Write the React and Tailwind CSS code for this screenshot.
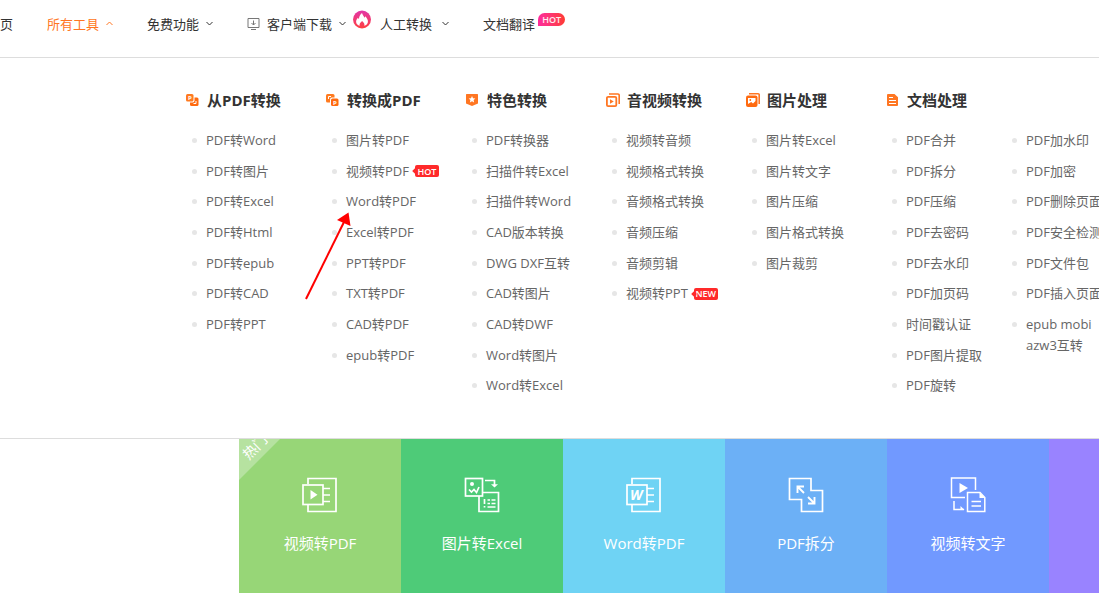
const toolGroups = [
  {
    title: "从PDF转换",
    icon: <FromPdfIcon />,
    lists: [["PDF转Word", "PDF转图片", "PDF转Excel", "PDF转Html", "PDF转epub", "PDF转CAD", "PDF转PPT"]],
  },
  {
    title: "转换成PDF",
    icon: <ToPdfIcon />,
    lists: [["图片转PDF", "视频转PDF", "Word转PDF", "Excel转PDF", "PPT转PDF", "TXT转PDF", "CAD转PDF", "epub转PDF"]],
  },
  {
    title: "特色转换",
    icon: <StarIcon />,
    lists: [
      [
        "PDF转换器",
        "扫描件转Excel",
        "扫描件转Word",
        "CAD版本转换",
        "DWG DXF互转",
        "CAD转图片",
        "CAD转DWF",
        "Word转图片",
        "Word转Excel",
      ],
    ],
  },
  {
    title: "音视频转换",
    icon: <MediaIcon />,
    lists: [["视频转音频", "视频格式转换", "音频格式转换", "音频压缩", "音频剪辑", "视频转PPT"]],
  },
  {
    title: "图片处理",
    icon: <ImageIcon />,
    lists: [["图片转Excel", "图片转文字", "图片压缩", "图片格式转换", "图片裁剪"]],
  },
  {
    title: "文档处理",
    icon: <DocIcon />,
    lists: [
      ["PDF合并", "PDF拆分", "PDF压缩", "PDF去密码", "PDF去水印", "PDF加页码", "时间戳认证", "PDF图片提取", "PDF旋转"],
      ["PDF加水印", "PDF加密", "PDF删除页面", "PDF安全检测", "PDF文件包", "PDF插入页面", "epub mobi azw3互转"],
    ],
  },
];

const badges = { 视频转PDF: "HOT", 视频转PPT: "NEW" };

const tiles = [
  { label: "视频转PDF", color: "bg-[#97d677]", icon: <VideoPdfIcon />, hot: true },
  { label: "图片转Excel", color: "bg-[#4ecb78]", icon: <ImageExcelIcon /> },
  { label: "Word转PDF", color: "bg-[#6fd3f4]", icon: <WordPdfIcon /> },
  { label: "PDF拆分", color: "bg-[#6cb0f6]", icon: <SplitIcon /> },
  { label: "视频转文字", color: "bg-[#7199ff]", icon: <VideoTextIcon /> },
];

function FromPdfIcon() {
  return (
    <svg width="14" height="14" viewBox="0 0 14 14">
      <rect x="4" y="4.500" width="8.500" height="8.500" rx="1.500" fill="#ff6a0f" />
      <rect x="-1" y="0" width="9.500" height="9.500" rx="2" fill="#fff" />
      <rect x="0" y="1" width="7.500" height="7.500" rx="1.500" fill="#ff7a1f" />
      <path d="M7.500 10.500h2.500V8" stroke="#fff" fill="none" />
      <text x="2" y="7" fontSize="6" fontWeight="700" fill="#fff">P</text>
    </svg>
  );
}

function ToPdfIcon() {
  return (
    <svg width="14" height="14" viewBox="0 0 14 14">
      <rect x="0" y="1" width="8.500" height="8.500" rx="1.500" fill="#ff7a1f" />
      <path d="M2.500 6V3.500H5" stroke="#fff" fill="none" />
      <rect x="4" y="4.500" width="10" height="10" rx="2" fill="#fff" />
      <rect x="5" y="5.500" width="7.500" height="7.500" rx="1.500" fill="#ff6a0f" />
      <text x="7" y="11.500" fontSize="6" fontWeight="700" fill="#fff">P</text>
    </svg>
  );
}

function StarIcon() {
  return (
    <svg width="14" height="14" viewBox="0 0 14 14">
      <path d="M.5 1h11q.5 0 .5.500V10.500l-6 2.500-6-2.500V1.500Q0 1 .5 1z" fill="#ff7622" />
      <path d="M6 3l1 2.200 2.400.2-1.800 1.600.5 2.400L6 8.200 3.900 9.400l.5-2.400-1.800-1.600 2.400-.2z" fill="#fff" />
    </svg>
  );
}

function MediaIcon() {
  return (
    <svg width="14" height="14" viewBox="0 0 14 14" fill="none" stroke="#ff7622">
      <path d="M3 1h9a1.200 1.200 0 0 1 1.200 1.200V11" strokeWidth="1.600" />
      <rect x=".9" y="3.900" width="9.400" height="9.200" rx="1.200" strokeWidth="1.800" />
      <path d="M4 6.300l3.800 2.200L4 10.700z" fill="#ff7622" stroke="none" />
    </svg>
  );
}

function ImageIcon() {
  return (
    <svg width="14" height="14" viewBox="0 0 14 14">
      <path d="M3 .8h9.200a1 1 0 0 1 1 1V11" fill="none" stroke="#ff7622" strokeWidth="1.600" />
      <rect x="0" y="2.500" width="11.500" height="11.500" rx="2" fill="#ff6a0f" />
      <path d="M2 5h7.500v3L7 10.500 5.200 9 2 11z" fill="#fff" />
      <circle cx="4.300" cy="7" r=".9" fill="#ff6a0f" />
    </svg>
  );
}

function DocIcon() {
  return (
    <svg width="14" height="14" viewBox="0 0 14 14">
      <path d="M2 1h6.500L12 4.200V12a1 1 0 0 1-1 1H2a1 1 0 0 1-1-1V2a1 1 0 0 1 1-1z" fill="#ff7622" />
      <path d="M3 4.500h4M3 7.500h7M3 10.500h7" stroke="#fff" />
    </svg>
  );
}

function VideoPdfIcon() {
  return (
    <svg width="36" height="36" viewBox="0 0 36 36" fill="none" stroke="#fff" strokeWidth="1.700">
      <path d="M6 7V1.500h28v33H6V28" />
      <rect x="1" y="8" width="20" height="19.500" />
      <path d="M21 11.500h7M21 18h7M21 24.500h7" />
      <path d="M8.500 13l7 4.700-7 4.700z" fill="#fff" stroke="none" />
    </svg>
  );
}

function ImageExcelIcon() {
  return (
    <svg width="36" height="36" viewBox="0 0 36 36" fill="none" stroke="#fff" strokeWidth="1.700">
      <rect x="1.500" y="1.500" width="17" height="17.500" />
      <circle cx="8" cy="7" r="2" fill="#fff" stroke="none" />
      <path d="M5 12.500l2.500 2.500 2.500-2.500 2.500 3 2.500-5.500" />
      <path d="M21 3.500h9.500V8" />
      <path d="M27 7.200h7l-3.500 3.300z" fill="#fff" stroke="none" />
      <path d="M18.500 15.500H34.500v19H15V19" />
      <path d="M20.500 22v5M20.500 29v1.500M23.500 23h2.500M27.500 23h4M23.500 26.500h2.500M27.500 26.500h4M23.500 30h8" />
    </svg>
  );
}

function WordPdfIcon() {
  return (
    <svg width="36" height="36" viewBox="0 0 36 36" fill="none" stroke="#fff" strokeWidth="1.700">
      <path d="M6 7V1.500h28v33H6V28" />
      <rect x="1" y="8" width="20" height="19.500" />
      <path d="M21 11.500h7M21 18h7M21 24.500h7" />
      <text x="4" y="23" fontSize="14" fontWeight="700" fontStyle="italic" fill="#fff" stroke="none">W</text>
    </svg>
  );
}

function SplitIcon() {
  return (
    <svg width="36" height="36" viewBox="0 0 36 36" fill="none" stroke="#fff" strokeWidth="1.700">
      <path d="M1.500 1.500h21.500v12h11.500v21H13.500v-12h-12z" />
      <path d="M9.500 16V9.500H16M10 10l6 6" strokeWidth="1.900" />
      <path d="M26.500 20v6.500H20M26 26l-6-6" strokeWidth="1.900" />
    </svg>
  );
}

function VideoTextIcon() {
  return (
    <svg width="36" height="36" viewBox="0 0 36 36" fill="none" stroke="#fff" strokeWidth="1.500">
      <path d="M25.500 13V1H1.500v19.500H15" />
      <path d="M9.500 6l8.500 5-8.500 5z" fill="#fff" stroke="none" />
      <path d="M4 24v8.500h10" />
      <path d="M10.500 33v-4l4 4z" fill="#fff" stroke="none" />
      <path d="M17.500 15.500H30l4.800 5v14H17.500z" />
      <path d="M29.500 15.500v5.500h5.300z" fill="#fff" stroke="none" />
      <path d="M21.500 24.500h9.500M21.500 29h9.500" />
    </svg>
  );
}

function Chevron({ up }) {
  return (
    <svg width="7" height="5" viewBox="0 0 7 5" fill="none" stroke="currentColor">
      <path d={up ? "M.5 4l3-3 3 3" : "M.5 1l3 3 3-3"} />
    </svg>
  );
}

function DownloadIcon() {
  return (
    <svg width="13" height="12" viewBox="0 0 13 12" fill="none" stroke="#777">
      <path d="M1 .5h11v9H1zM4 11.500h5M6.500 2.500v4.500M4.500 5l2 2 2-2" />
    </svg>
  );
}

function FlameIcon() {
  return (
    <svg width="18" height="19" viewBox="0 0 18 19" className="absolute -top-1 -left-[27px]">
      <defs>
        <linearGradient id="flame" x1="0" y1="0" x2="0" y2="1">
          <stop offset="0" stopColor="#e235a8" />
          <stop offset="1" stopColor="#ff4040" />
        </linearGradient>
      </defs>
      <circle cx="9" cy="9.500" r="9" fill="url(#flame)" />
      <path
        d="M9 3c.5 2 1.900 2.900 2.400 4.700.5-.3.700-.8.8-1.400 1.700 1.600 2.900 3.600 2.700 5.600-.2 1.900-1.700 3.300-3.600 3.800.5-1.700-.4-3-2.200-4.700-1.900 1.600-2.900 2.900-2.400 4.700-2.100-.5-3.600-2-3.600-4 0-1.800 1-2.900 1.900-4 .2.600.5 1 1 1.200C6 6.600 7 4.500 9 3z"
        fill="#fff"
      />
    </svg>
  );
}

function NavHot() {
  return (
    <span className="absolute -top-px left-full ml-[3px] flex h-[13px] w-[27px] items-center justify-center rounded-full rounded-bl-none bg-gradient-to-r from-[#fd2a9b] to-[#ff3a2e] text-[9px] leading-none font-semibold text-white/90">
      HOT
    </span>
  );
}

function TagBadge({ text }) {
  return (
    <span className="relative ml-1.5 flex h-3 w-6 items-center justify-center rounded-xs bg-[#ff2a2a] text-[9px] leading-none font-semibold text-white">
      <i className="absolute top-1 -left-0.5 size-1 rotate-45 bg-[#ff2a2a]" />
      {text}
    </span>
  );
}

function ToolList({ items }) {
  return (
    <ul className="grid h-[276px] grid-rows-9 text-[13px] leading-[21px] text-[#666]">
      {items.map((item) => (
        <li key={item} className={`flex items-start gap-[9px] pl-1.5 ${item.length > 12 ? "row-span-2" : ""}`}>
          <span className="mt-2 size-[5px] shrink-0 rounded-full bg-[#e6e6e6]" />
          <a href="#" className={`flex items-center ${item.length > 12 ? "w-20" : "whitespace-nowrap"}`}>
            {item}
            {badges[item] && <TagBadge text={badges[item]} />}
          </a>
        </li>
      ))}
    </ul>
  );
}

export default function App() {
  return (
    <div className="relative overflow-hidden bg-white font-['Open_Sans','Noto_Sans_CJK_SC',sans-serif] text-[#333]">
      {/* Top navigation */}
      <header className="border-b border-[#ddd]">
        <nav className="-ml-[13px] flex h-[57px] items-center gap-[34px] pb-[10px] text-[13px] leading-5 whitespace-nowrap">
          <a href="#">首页</a>
          <button type="button" className="flex items-center gap-[7px] text-[#ff7622]">
            所有工具 <Chevron up />
          </button>
          <button type="button" className="flex items-center gap-[7px]">
            免费功能 <Chevron />
          </button>
          <button type="button" className="flex items-center gap-[7px]">
            <DownloadIcon />
            客户端下载 <Chevron />
          </button>
          <button type="button" className="relative flex items-center gap-[10px]">
            <FlameIcon />
            人工转换 <Chevron />
          </button>
          <a href="#" className="relative">
            文档翻译
            <NavHot />
          </a>
        </nav>
      </header>

      {/* All tools panel */}
      <section className="flex border-b border-[#ddd] pt-8 pb-8 pl-[186px]">
        {toolGroups.map((group) => (
          <div key={group.title} className="shrink-0">
            <h3 className="mb-5 flex h-5 items-center gap-[7px] text-[15px] leading-5 font-bold whitespace-nowrap">
              {group.icon}
              {group.title}
            </h3>
            <div className="flex">
              {group.lists.map((items, i) => (
                <div key={i} className={group.lists.length > 1 ? "w-[120px] shrink-0" : "w-[140px] shrink-0"}>
                  <ToolList items={items} />
                </div>
              ))}
            </div>
          </div>
        ))}
      </section>

      {/* Popular tools */}
      <section className="flex pl-[239px]">
        {tiles.map((tile) => (
          <a
            key={tile.label}
            href="#"
            className={`relative flex h-[154px] w-[162px] shrink-0 flex-col items-center overflow-hidden pt-[38px] text-[15px] leading-5 text-white ${tile.color}`}
          >
            {tile.hot && (
              <span className="absolute top-0 left-0 size-[41px] bg-white/30 [clip-path:polygon(0_0,100%_0,0_100%)]">
                <span className="absolute -top-0.5 left-0.5 -rotate-45 text-sm leading-5">热门</span>
              </span>
            )}
            {tile.icon}
            <span className="mt-5">{tile.label}</span>
          </a>
        ))}
        <div className="flex-1 bg-[#9983ff]" />
      </section>

      {/* Pointer to Word转PDF */}
      <svg width="48" height="90" viewBox="0 0 48 90" className="absolute top-[212px] left-[304px]">
        <path d="M2 87L40 10" stroke="#f00" strokeWidth="2" />
        <path d="M44.500.5L33 8l13.500 6z" fill="#f00" />
      </svg>
    </div>
  );
}
